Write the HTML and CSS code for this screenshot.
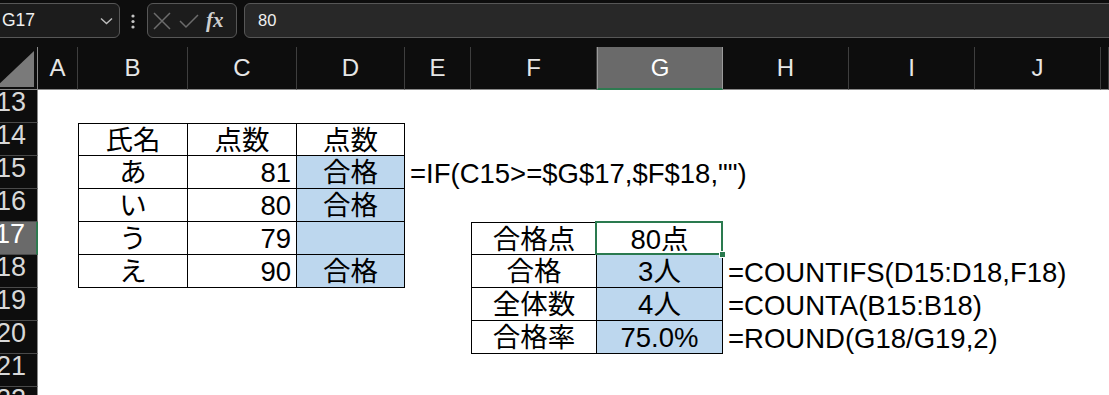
FILE: index.html
```html
<!DOCTYPE html>
<html lang="ja">
<head>
    <meta charset="UTF-8">
    <title>合格判定</title>
    <link rel="stylesheet" href="styles.css">
</head>
<body>
    <!-- Name box + formula bar -->
    <div class="topbar">
        <div class="namebox">
            <span>G17</span>
            <svg class="chevron" width="13" height="8" viewBox="0 0 13 8"><path d="M1 1.5 L6.5 6.5 L12 1.5" fill="none" stroke="#bdbdbd" stroke-width="1.4"/></svg>
        </div>
        <svg class="dots" width="4" height="15" viewBox="0 0 4 15"><circle cx="2" cy="2" r="1.6" fill="#c4c4c4"/><circle cx="2" cy="7.5" r="1.6" fill="#c4c4c4"/><circle cx="2" cy="13" r="1.6" fill="#c4c4c4"/></svg>
        <div class="fxbox">
            <svg width="18" height="18" viewBox="0 0 18 18"><path d="M1 1 L17 17 M17 1 L1 17" stroke="#6c6c6c" stroke-width="1.5"/></svg>
            <svg width="20" height="18" viewBox="0 0 20 18"><path d="M1 9 L7 15 L19 3" fill="none" stroke="#6c6c6c" stroke-width="1.5"/></svg>
            <span class="fx">fx</span>
        </div>
        <div class="formula">80</div>
    </div>

    <div class="sheet">
        <div class="corner">
            <svg width="38" height="43" viewBox="0 0 38 43"><polygon points="34,4 34,40 -4,40" fill="#7a7a7a"/></svg>
        </div>
        <div class="colhead">A</div>
        <div class="colhead">B</div>
        <div class="colhead">C</div>
        <div class="colhead">D</div>
        <div class="colhead">E</div>
        <div class="colhead">F</div>
        <div class="colhead active">G</div>
        <div class="colhead">H</div>
        <div class="colhead">I</div>
        <div class="colhead">J</div>
        <div class="colhead"></div>

        <div class="rowhead"><span>13</span></div>
        <div class="rowhead"><span>14</span></div>
        <div class="rowhead"><span>15</span></div>
        <div class="rowhead"><span>16</span></div>
        <div class="rowhead active"><span>17</span></div>
        <div class="rowhead"><span>18</span></div>
        <div class="rowhead"><span>19</span></div>
        <div class="rowhead"><span>20</span></div>
        <div class="rowhead"><span>21</span></div>
        <div class="rowhead"><span>22</span></div>

        <!-- 点数表 B14:D18 -->
        <div class="tbl tbl-scores">
            <div class="c">氏名</div>
            <div class="c">点数</div>
            <div class="c">点数</div>

            <div class="c">あ</div>
            <div class="c num">81</div>
            <div class="c blue">合格</div>

            <div class="c">い</div>
            <div class="c num">80</div>
            <div class="c blue">合格</div>

            <div class="c">う</div>
            <div class="c num">79</div>
            <div class="c blue"></div>

            <div class="c">え</div>
            <div class="c num">90</div>
            <div class="c blue">合格</div>
        </div>

        <div class="note note-if">=IF(C15&gt;=$G$17,$F$18,"")</div>

        <!-- 集計表 F17:G20 -->
        <div class="tbl tbl-summary">
            <div class="c">合格点</div>
            <div class="c sel">80点</div>

            <div class="c">合格</div>
            <div class="c blue">3人</div>

            <div class="c">全体数</div>
            <div class="c blue">4人</div>

            <div class="c">合格率</div>
            <div class="c blue">75.0%</div>
        </div>

        <div class="note note-h r18">=COUNTIFS(D15:D18,F18)</div>
        <div class="note note-h r19">=COUNTA(B15:B18)</div>
        <div class="note note-h r20">=ROUND(G18/G19,2)</div>
    </div>
</body>
</html>
```

FILE: styles.css
```css
body {
    margin: 0;
    width: 1109px;
    height: 395px;
    overflow: hidden;
    background: #ffffff;
    font-family: "Liberation Sans", "Noto Sans CJK JP", sans-serif;
}

/* ---- formula bar ---- */
.topbar {
    height: 47px;
    box-sizing: border-box;
    padding-top: 3px;
    background: #0d0d0d;
    display: flex;
    align-items: flex-start;
    overflow: hidden;
}

.namebox {
    width: 126px;
    height: 35px;
    margin-left: -6px;
    box-sizing: border-box;
    border: 1px solid #575757;
    border-radius: 6px;
    background: #1c1c1c;
    display: flex;
    align-items: center;
    padding-left: 7px;
    color: #f0f0f0;
    font-size: 17.5px;
}

.chevron {
    margin-left: auto;
    margin-right: 6px;
}

.dots {
    margin: 11px 12px 0 11px;
}

.fxbox {
    width: 90px;
    height: 35px;
    box-sizing: border-box;
    border: 1px solid #575757;
    border-radius: 6px;
    background: #1c1c1c;
    display: flex;
    align-items: center;
    gap: 8px;
    padding-left: 5px;
}

.fx {
    font-family: "Liberation Serif", serif;
    font-style: italic;
    font-weight: bold;
    font-size: 21px;
    color: #cfcfcf;
    margin-left: -1px;
}

.formula {
    flex: 1;
    height: 35px;
    margin-left: 7px;
    margin-right: -10px;
    box-sizing: border-box;
    border: 1px solid #575757;
    border-radius: 6px;
    background: #282828;
    color: #f0f0f0;
    font-size: 16.5px;
    display: flex;
    align-items: center;
    padding-left: 13px;
}

/* ---- sheet grid ---- */
.sheet {
    display: grid;
    grid-template-columns: 38px 40px 110px 109px 108px 66px 126px 126px 126px 126px 126px 1fr;
    grid-template-rows: 43px repeat(10, 33px);
}

.corner {
    background: #0d0d0d;
    border-right: 1px solid #8a8a8a;
    border-bottom: 1px solid #8a8a8a;
    box-sizing: border-box;
    overflow: hidden;
}

.corner svg {
    display: block;
}

.colhead {
    background: #0d0d0d;
    border-right: 1px solid #3e3e3e;
    border-bottom: 1px solid #8a8a8a;
    box-sizing: border-box;
    color: #e6e6e6;
    font-size: 24px;
    display: flex;
    align-items: center;
    justify-content: center;
}

.colhead.active {
    background: #6a6a6a;
    border-left: 1px solid #9a9a9a;
    border-right: 1px solid #9a9a9a;
    border-bottom: 2px solid #2e7a50;
    color: #ffffff;
}

.rowhead {
    grid-column: 1;
    background: #0d0d0d;
    border-right: 1px solid #8a8a8a;
    border-bottom: 1px solid #4a4a4a;
    box-sizing: border-box;
    color: #d8d8d8;
    font-size: 27px;
    line-height: 24px;
    display: flex;
    justify-content: flex-end;
    padding-right: 11px;
    overflow: hidden;
}

.rowhead.active {
    background: #6a6a6a;
    border-right: 2px solid #2e7a50;
    color: #ffffff;
}

/* ---- tables ---- */
.tbl {
    display: grid;
    border-left: 1px solid #000;
    border-top: 1px solid #000;
    box-sizing: border-box;
    font-size: 27.5px;
    color: #000;
}

.tbl-scores {
    grid-column: 3 / 6;
    grid-row: 3 / 8;
    grid-template-columns: 109px 109px 108px;
    grid-template-rows: 32px repeat(4, 33px);
}

.tbl-summary {
    grid-column: 7 / 9;
    grid-row: 6 / 10;
    grid-template-columns: 125px 126px;
    grid-template-rows: 32px repeat(3, 33px);
}

.c {
    border-right: 1px solid #000;
    border-bottom: 1px solid #000;
    text-align: center;
    line-height: 28px;
    padding-top: 3px;
    white-space: nowrap;
}

.c.num {
    text-align: right;
    padding-right: 5px;
}

.c.blue {
    background: #bdd7ee;
}

.c.sel {
    position: relative;
}

.c.sel::after {
    content: "";
    position: absolute;
    top: -2px;
    left: -2px;
    right: -1px;
    bottom: -1px;
    border: 2px solid #2a7a4f;
}

.c.sel::before {
    content: "";
    position: absolute;
    right: -4px;
    bottom: -4px;
    width: 5px;
    height: 5px;
    background: #2a7a4f;
    border: 1px solid #ffffff;
    z-index: 1;
}

/* formulas written beside the cells */
.note {
    font-size: 27.5px;
    line-height: 28px;
    padding-top: 4px;
    padding-left: 5px;
    white-space: nowrap;
    color: #000;
}

.note-if {
    grid-column: 6 / 10;
    grid-row: 4;
}

.note-h {
    grid-column: 9 / 12;
}

.r18 { grid-row: 7; }
.r19 { grid-row: 8; }
.r20 { grid-row: 9; }
```
